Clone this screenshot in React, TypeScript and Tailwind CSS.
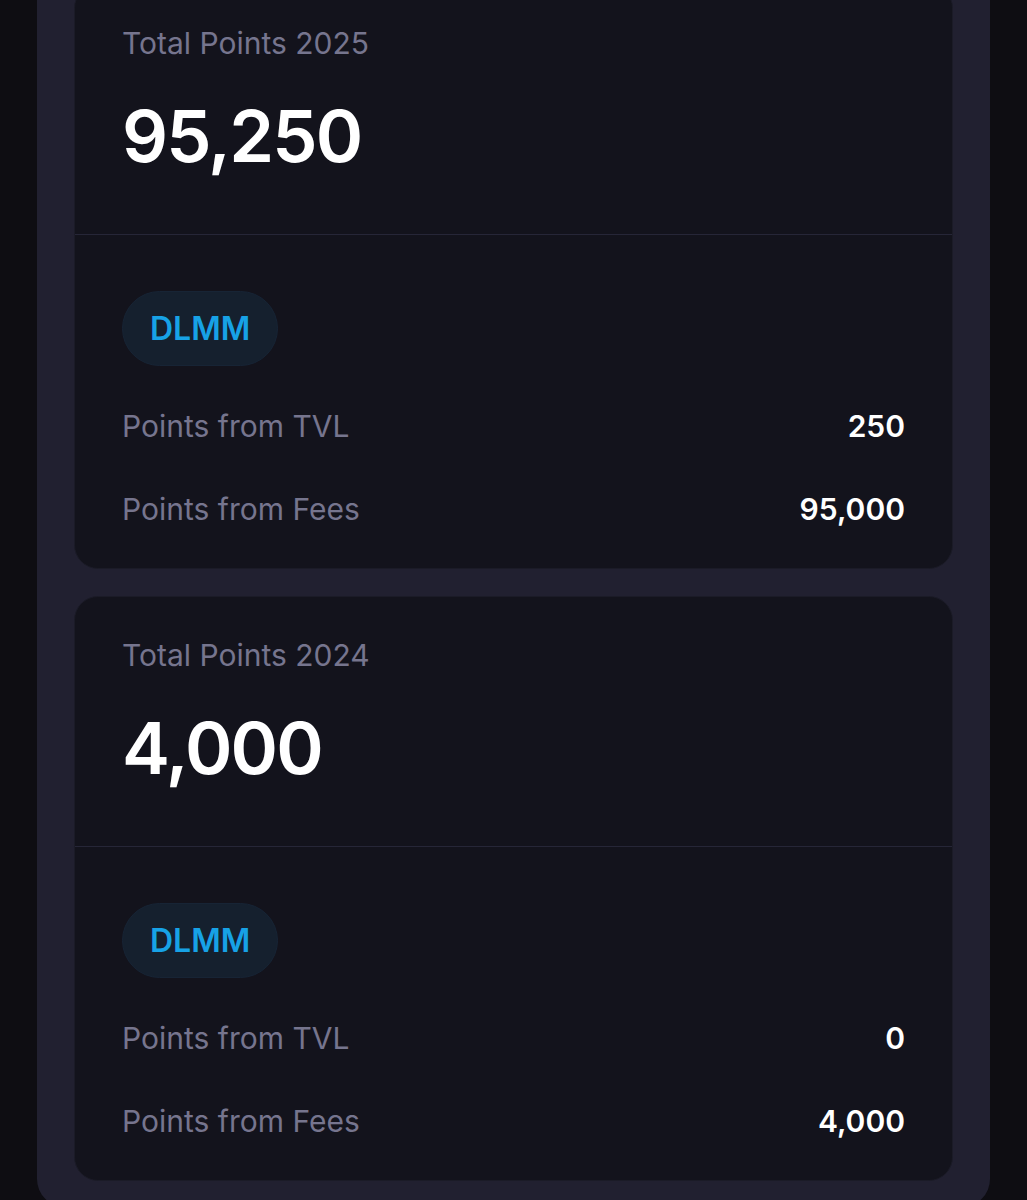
const seasons = [
  { year: 2025, total: '95,250', tvl: '250', fees: '95,000' },
  { year: 2024, total: '4,000', tvl: '0', fees: '4,000' },
];

function PointsCard({ year, total, tvl, fees }: { year: number; total: string; tvl: string; fees: string }) {
  return (
    <div className="rounded-[24px] border border-[#1b1b27] bg-[#13131c]">
      <div className="h-[250px] border-b border-[#262637] px-[47px] pt-[38px]">
        <div className="text-[30px] leading-[40px] text-[#76758e]">Total Points {year}</div>
        <div className="mt-[33px] text-[72px] font-semibold leading-[80px] tracking-tight text-white">{total}</div>
      </div>
      <div className="px-[47px] pt-[56px] pb-[39px]">
        <div className="inline-flex h-[75px] items-center rounded-full border border-[#172435] bg-[#15202e] px-[27px] text-[32px] font-semibold text-[#17a2e6]">
          DLMM
        </div>
        <div className="mt-[40px] flex items-center justify-between text-[30px] leading-[40px]">
          <span className="text-[#76758e]">Points from TVL</span>
          <span className="font-semibold text-white">{tvl}</span>
        </div>
        <div className="mt-[43px] flex items-center justify-between text-[30px] leading-[40px]">
          <span className="text-[#76758e]">Points from Fees</span>
          <span className="font-semibold text-white">{fees}</span>
        </div>
      </div>
    </div>
  );
}

export default function App() {
  return (
    <div className="h-[1200px] overflow-hidden bg-[#0e0d12] font-['Inter',sans-serif]">
      <div className="mx-[37px] -mt-[45px] flex flex-col gap-[27px] rounded-[28px] bg-[#212030] px-[37px] pt-[29px] pb-[26px]">
        {seasons.map((s) => (
          <PointsCard key={s.year} {...s} />
        ))}
      </div>
    </div>
  );
}
